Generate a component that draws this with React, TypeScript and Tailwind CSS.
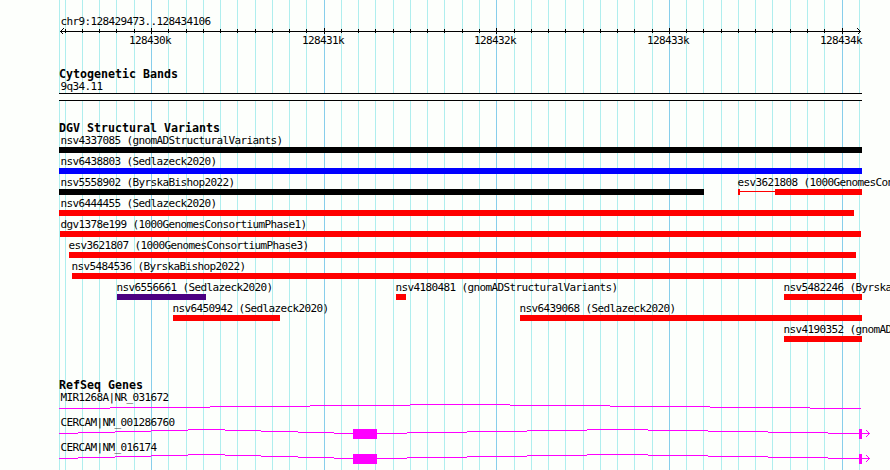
import React from "react";

const MONO = "font-['DejaVu_Sans_Mono','Liberation_Mono',monospace]";
const LABEL = `${MONO} text-[11px] leading-[14px] tracking-[-0.622px] whitespace-pre text-black`;
const HEADING = `${MONO} text-[11.63px] leading-[12px] font-bold whitespace-pre text-black`;

const GRID = [
  65, 82, 99, 116, 134, 151, 168, 186, 203, 220, 237, 255, 272, 289, 306, 324, 341, 358, 375, 393, 410, 427, 444,
  462, 479, 496, 514, 531, 548, 565, 583, 600, 617, 634, 652, 669, 686, 703, 721, 738, 755, 772, 790, 807, 824, 842,
];
const MAJOR = [151, 324, 496, 669, 842];

type Feature = { name: string; start: number; end: number; color: string; dx?: number; split?: boolean };

const ROWS: Feature[][] = [
  [{ name: "nsv4337085 (gnomADStructuralVariants)", start: 59, end: 862, color: "bg-black", dx: 1.5 }],
  [{ name: "nsv6438803 (Sedlazeck2020)", start: 59, end: 862, color: "bg-[#0000ff]", dx: 1.5 }],
  [
    { name: "nsv5558902 (ByrskaBishop2022)", start: 59, end: 704, color: "bg-black", dx: 1.5 },
    { name: "esv3621808 (1000GenomesConsortiumPhase3)", start: 738, end: 862, color: "bg-[#ff0000]", split: true },
  ],
  [{ name: "nsv6444455 (Sedlazeck2020)", start: 59, end: 854, color: "bg-[#ff0000]", dx: 1.5 }],
  [{ name: "dgv1378e199 (1000GenomesConsortiumPhase1)", start: 60, end: 861, color: "bg-[#ff0000]", dx: 0.5 }],
  [{ name: "esv3621807 (1000GenomesConsortiumPhase3)", start: 69, end: 856, color: "bg-[#ff0000]" }],
  [{ name: "nsv5484536 (ByrskaBishop2022)", start: 72, end: 856, color: "bg-[#ff0000]" }],
  [
    { name: "nsv6556661 (Sedlazeck2020)", start: 117, end: 206, color: "bg-[#4b0082]" },
    { name: "nsv4180481 (gnomADStructuralVariants)", start: 396, end: 406, color: "bg-[#ff0000]" },
    { name: "nsv5482246 (ByrskaBishop2022)", start: 784, end: 862, color: "bg-[#ff0000]" },
  ],
  [
    { name: "nsv6450942 (Sedlazeck2020)", start: 173, end: 280, color: "bg-[#ff0000]" },
    { name: "nsv6439068 (Sedlazeck2020)", start: 520, end: 862, color: "bg-[#ff0000]" },
  ],
  [{ name: "nsv4190352 (gnomADStructuralVariants)", start: 784, end: 862, color: "bg-[#ff0000]" }],
];

// Each segment is [start x, end x, y within the track].
type Segment = [number, number, number];

const MIR: Segment[] = [
  [59, 110, 4], [110, 210, 3], [210, 310, 2], [310, 410, 1], [410, 510, 0],
  [510, 610, 1], [610, 710, 2], [710, 810, 3], [810, 861, 4],
];
const CERCAM: Segment[] = [
  [59, 78, 4], [78, 115, 3], [115, 151, 2], [151, 188, 1], [188, 225, 0], [225, 261, 1], [261, 298, 2],
  [298, 334, 3], [334, 353, 4], [377, 407, 4], [407, 467, 3], [467, 527, 2], [527, 587, 1], [587, 648, 0],
  [648, 708, 1], [708, 768, 2], [768, 828, 3], [828, 870, 4],
];

function GridLines() {
  return (
    <svg className="absolute inset-0" width="890" height="470" shapeRendering="crispEdges">
      {[59, ...GRID, 859].map((x) => (
        <rect key={x} x={x} y={0} width={1} height={470} fill={MAJOR.includes(x) ? "#87ceeb" : "#afeeee"} />
      ))}
    </svg>
  );
}

function Ruler() {
  return (
    <div className="pt-[15px]">
      <div className={`${LABEL} h-3 pl-[60.5px]`}>chr9:128429473..128434106</div>
      <svg className="block" width="890" height="7" shapeRendering="crispEdges">
        <rect x={60} y={4} width={801} height={1} />
        {GRID.map((x) =>
          MAJOR.includes(x) ? (
            <rect key={x} x={x} y={1} width={1} height={6} />
          ) : (
            <rect key={x} x={x} y={2} width={1} height={4} />
          ),
        )}
        {[1, 2, 3].map((d) => (
          <g key={d}>
            <rect x={60 + d} y={4 - d} width={1} height={1} />
            <rect x={60 + d} y={4 + d} width={1} height={1} />
            <rect x={860 - d} y={4 - d} width={1} height={1} />
            <rect x={860 - d} y={4 + d} width={1} height={1} />
          </g>
        ))}
      </svg>
      <div className={`${LABEL} flex h-[13px]`}>
        {MAJOR.map((x, i) => (
          <span key={x} className="w-[42px] shrink-0" style={{ marginLeft: i ? x - MAJOR[i - 1] - 42 : x - 22 }}>
            {`12843${i}k`}
          </span>
        ))}
      </div>
    </div>
  );
}

function VariantRow({ items }: { items: Feature[] }) {
  return (
    <div className="flex h-[21px]">
      {items.map((f, i) => (
        <div
          key={f.name}
          className="shrink-0"
          style={{ marginLeft: f.start - (i ? items[i - 1].end : 0), width: f.end - f.start }}
        >
          <div className={`${LABEL} h-[13px]`} style={{ textIndent: f.dx ?? -0.5 }}>
            {f.name}
          </div>
          {f.split ? (
            <div className="flex h-1.5">
              <div className="w-0.5 bg-[#ff0000]" />
              <div className="mt-[2px] h-px w-[35px] bg-[#ff0000]" />
              <div className="flex-1 bg-[#ff0000]" />
            </div>
          ) : (
            <div className={`h-1.5 ${f.color}`} />
          )}
        </div>
      ))}
    </div>
  );
}

function Gene({ name, segments, exons }: { name: string; segments: Segment[]; exons?: boolean }) {
  return (
    <div className="h-[25px]">
      <div className={`${LABEL} h-3 pl-[60.5px]`}>{name}</div>
      <svg className="block" width="890" height="13" fill="#ff00ff" shapeRendering="crispEdges">
        {segments.map(([a, b, y]) => (
          <rect key={a} x={a} y={y + 1} width={b - a} height={1} />
        ))}
        {exons && (
          <>
            <rect x={353} y={1} width={24} height={10} />
            <rect x={859} y={1} width={3} height={10} />
            {[1, 2, 3].map((d) => (
              <g key={d}>
                <rect x={869 - d} y={5 - d} width={1} height={1} />
                <rect x={869 - d} y={5 + d} width={1} height={1} />
              </g>
            ))}
          </>
        )}
      </svg>
    </div>
  );
}

export default function App() {
  return (
    <div className="relative h-[470px] w-[890px] overflow-hidden bg-[#fdfffc]">
      <GridLines />
      <main className="relative">
        <Ruler />
        <section className="pt-[21px]">
          <h2 className={`${HEADING} pl-[59px]`}>Cytogenetic Bands</h2>
          <div className={`${LABEL} h-[13px] pl-[60.5px]`}>9q34.11</div>
          <div className="ml-[59px] h-2 w-[803px] border-y border-black bg-[#fdfffc]" />
        </section>
        <section className="pt-[21px]">
          <h2 className={`${HEADING} pl-[59px]`}>DGV Structural Variants</h2>
          {ROWS.map((row) => (
            <VariantRow key={row[0].name} items={row} />
          ))}
        </section>
        <section className="pt-[35px]">
          <h2 className={`${HEADING} pl-[59px]`}>RefSeq Genes</h2>
          <Gene name="MIR1268A|NR_031672" segments={MIR} />
          <Gene name="CERCAM|NM_001286760" segments={CERCAM} exons />
          <Gene name="CERCAM|NM_016174" segments={CERCAM} exons />
        </section>
      </main>
    </div>
  );
}
